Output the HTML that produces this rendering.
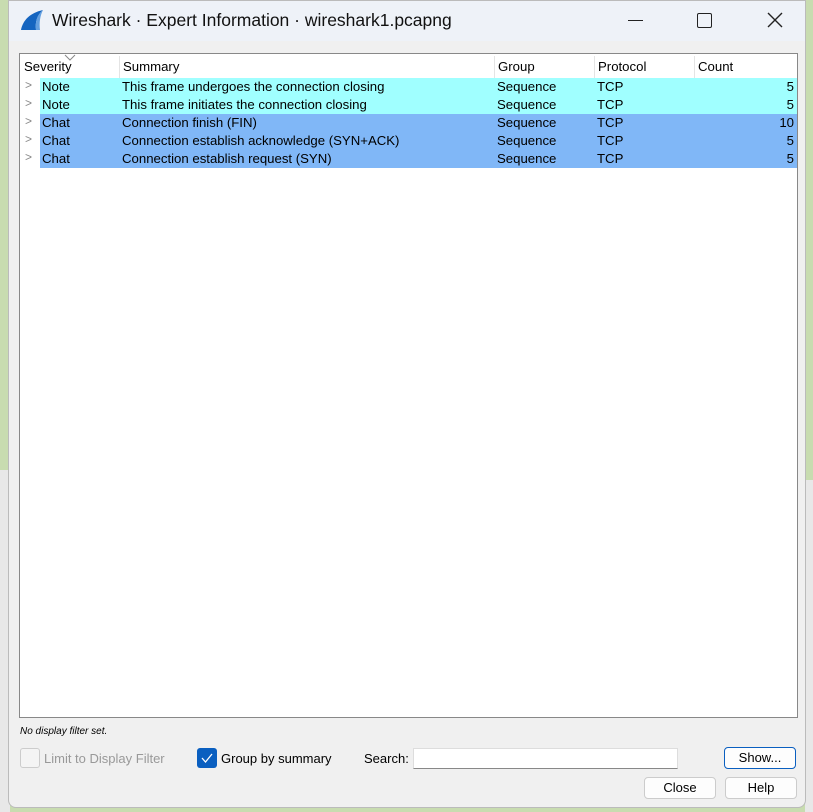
<!DOCTYPE html>
<html><head><style>
body{margin:0;width:813px;height:812px;position:relative;overflow:hidden;background:#c8dcb0;font-family:"Liberation Sans",sans-serif;font-size:13px;color:#000}
.abs{position:absolute}
#bgl{left:0;top:470px;width:10px;height:342px;background:#e8e8e8}
#bgr{left:805px;top:480px;width:8px;height:332px;background:#e8e8e8}
#dlg{left:8px;top:0;width:798px;height:808px;background:#f0f0f0;border:1px solid #bbb;border-radius:0 0 8px 8px;box-sizing:border-box}
#title{left:0;top:0;width:796px;height:40px;background:#eef2f8}
#tbl{left:10px;top:52px;width:779px;height:665px;background:#fff;border:1px solid #888;box-sizing:border-box;font-size:13.2px}
.hd{top:2px;height:22px;line-height:22px}
.sep{top:2px;width:1px;height:22px;background:#e4e4e4}
.row{left:20px;width:757px;height:18px;line-height:18px}
.row span{position:absolute}
.chev{position:absolute;left:5px;color:#888;font-size:12px}
</style></head><body>
<div class="abs" id="bgl"></div><div class="abs" id="bgr"></div>
<div class="abs" id="dlg">
 <div class="abs" id="title">
  <svg class="abs" style="left:11px;top:8px" width="24" height="22" viewBox="0 0 24 22"><path d="M1 21 C3 11 10 4 23 1 C17 6 15 13 16 21 Z" fill="#1565c0"/><path d="M16 21 C15 13 17 6 23 1 C20 7 19 14 20 21Z" fill="#64a0e0"/></svg>
  <div class="abs" style="left:43px;top:9px;font-size:17.5px;color:#111">Wireshark · Expert Information · wireshark1.pcapng</div>
  <div class="abs" style="left:619px;top:19px;width:15px;height:1px;background:#222"></div>
  <div class="abs" style="left:688px;top:12px;width:13px;height:13px;border:1.5px solid #222;border-radius:2px"></div>
  <svg class="abs" style="left:758px;top:11px" width="16" height="16"><path d="M1 1L15 15M15 1L1 15" stroke="#222" stroke-width="1.4"/></svg>
 </div>
 <div class="abs" id="tbl">
  <svg class="abs" style="left:44px;top:0" width="12" height="7"><path d="M1 1L6 6L11 1" stroke="#888" fill="none"/></svg>
  <div class="abs hd" style="left:4px">Severity</div>
  <div class="abs sep" style="left:99px"></div>
  <div class="abs hd" style="left:103px">Summary</div>
  <div class="abs sep" style="left:474px"></div>
  <div class="abs hd" style="left:478px">Group</div>
  <div class="abs sep" style="left:574px"></div>
  <div class="abs hd" style="left:578px">Protocol</div>
  <div class="abs sep" style="left:674px"></div>
  <div class="abs hd" style="left:678px">Count</div>
  <div class="abs" style="left:0;top:24px;width:777px">
   <div style="position:relative;height:18px"><span class="chev">&gt;</span><div class="abs row" style="background:#a0ffff"><span style="left:2px">Note</span><span style="left:82px">This frame undergoes the connection closing</span><span style="left:457px">Sequence</span><span style="left:557px">TCP</span><span style="right:3px">5</span></div></div>
   <div style="position:relative;height:18px"><span class="chev">&gt;</span><div class="abs row" style="background:#a0ffff"><span style="left:2px">Note</span><span style="left:82px">This frame initiates the connection closing</span><span style="left:457px">Sequence</span><span style="left:557px">TCP</span><span style="right:3px">5</span></div></div>
   <div style="position:relative;height:18px"><span class="chev">&gt;</span><div class="abs row" style="background:#80b7f7"><span style="left:2px">Chat</span><span style="left:82px">Connection finish (FIN)</span><span style="left:457px">Sequence</span><span style="left:557px">TCP</span><span style="right:3px">10</span></div></div>
   <div style="position:relative;height:18px"><span class="chev">&gt;</span><div class="abs row" style="background:#80b7f7"><span style="left:2px">Chat</span><span style="left:82px">Connection establish acknowledge (SYN+ACK)</span><span style="left:457px">Sequence</span><span style="left:557px">TCP</span><span style="right:3px">5</span></div></div>
   <div style="position:relative;height:18px"><span class="chev">&gt;</span><div class="abs row" style="background:#80b7f7"><span style="left:2px">Chat</span><span style="left:82px">Connection establish request (SYN)</span><span style="left:457px">Sequence</span><span style="left:557px">TCP</span><span style="right:3px">5</span></div></div>
  </div>
 </div>
 <div class="abs" style="left:11px;top:725px;font-size:10px;font-style:italic">No display filter set.</div>
 <div class="abs" style="left:11px;top:747px;width:18px;height:18px;border:1px solid #ccc;border-radius:3px;background:#f4f4f4"></div>
 <div class="abs" style="left:35px;top:750px;color:#999">Limit to Display Filter</div>
 <div class="abs" style="left:188px;top:747px;width:20px;height:20px;border-radius:3px;background:#0a5fc0"><svg width="20" height="20"><path d="M5 10L8.5 14L15 6" stroke="#fff" stroke-width="1.3" fill="none"/></svg></div>
 <div class="abs" style="left:212px;top:750px">Group by summary</div>
 <div class="abs" style="left:355px;top:750px">Search:</div>
 <div class="abs" style="left:404px;top:747px;width:263px;height:19px;background:#fff;border:1px solid #ddd;border-bottom:1px solid #888"></div>
 <div class="abs" style="left:715px;top:746px;width:72px;height:22px;background:#fdfdfd;border:1px solid #0a5fc0;border-radius:4px;box-sizing:border-box;text-align:center;line-height:20px">Show...</div>
 <div class="abs" style="left:635px;top:776px;width:72px;height:22px;background:#fdfdfd;border:1px solid #ccc;border-radius:4px;box-sizing:border-box;text-align:center;line-height:20px">Close</div>
 <div class="abs" style="left:716px;top:776px;width:72px;height:22px;background:#fdfdfd;border:1px solid #ccc;border-radius:4px;box-sizing:border-box;text-align:center;line-height:20px">Help</div>
</div>
</body></html>
